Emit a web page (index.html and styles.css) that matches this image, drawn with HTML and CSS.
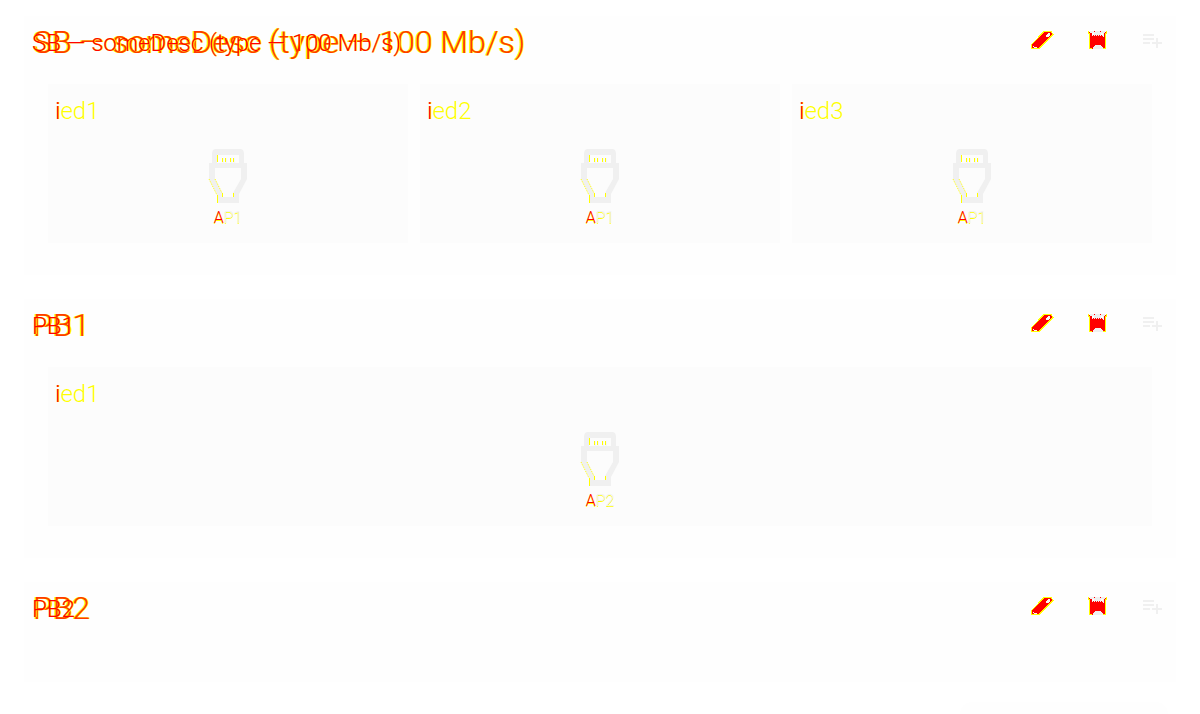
FILE: index.html
```html
<!DOCTYPE html>
<html lang="en">
<head>
<meta charset="utf-8">
<title>Subnetworks</title>
<link rel="stylesheet" href="styles.css">
</head>
<body>
<svg class="defs" width="0" height="0" aria-hidden="true">
  <symbol id="edit" viewBox="0 0 24 24">
    <path d="M1.5 14.5L14 1.5h7l2 3L9 18.5H1.5z" fill="#f00" stroke="#ff0" shape-rendering="crispEdges"/>
    <path d="M16 5l2-2h2v3l-2 1h-2zM3 16h1v1h3v1H4z" fill="#f8f8f8" shape-rendering="crispEdges"/>
  </symbol>
  <symbol id="delete" viewBox="0 0 24 24">
    <g shape-rendering="crispEdges">
      <path d="M4 2h17v17H4z" fill="#f00"/>
      <path d="M3 1v3h1v15h3v-1H5V3H4V1zM22 1v3h-1v15h-3v-1h2V3h1V1z" fill="#ff0"/>
      <path d="M5 1h15v2h-1v4h-1V6h-1V5h-1v1h-1V5h-1v1h-1V5h-1v1h-1V5h-1v1H9V5H8v1H7V3H5z" fill="#f0f0f0"/>
      <path d="M7 3h2v2H7zM16 3h2v2h-2z" fill="#fff"/>
      <path d="M8 19v-2h1v-1h1v-1h6v1h1v1h1v2z" fill="#f0f0f0"/>
      <path d="M9 1h1v1H9zM15 1h1v1h-1z" fill="#f00"/>
    </g>
  </symbol>
  <symbol id="add" viewBox="0 0 24 24">
    <path d="M3 4h11v2H3zM3 8h11v2H3zM3 12h7v2H3zM16 8h2v4h4v2h-4v4h-2v-4h-4v-2h4z" fill="#f0f0f0"/>
  </symbol>
  <symbol id="port" viewBox="0 0 40 56">
    <path fill="#f0f0f0" fill-rule="evenodd" d="M8 1h24q4 0 4 5v9h3v16l-8 15v9H9v-9L1 31V15h3V6q0-5 4-5zM9 7v8h22V7zM7 20v11l7 14v4h11v-4l8-14V20z"/>
    <path d="M15 10v5M18 10v5M23 10v5M26 10v5" stroke="#f0f0f0" fill="none"/>
    <path d="M9.500 7v7M14.500 10v4M17.500 10v4M22.500 10v4M25.500 10v4M9.500 47v8M14.500 45v4M25.500 45v4" stroke="#ff0" fill="none" shape-rendering="crispEdges"/>
    <path d="M1 31l8 16M7 31l7 14" stroke="#ff0" stroke-dasharray="1 1" fill="none"/>
  </symbol>
</svg>
<main class="page">
  <section class="subnet">
    <header class="bar">
      <h1 class="title">SB — someDesc (type — 100 Mb/s)<span class="ghost" aria-hidden="true">SB — someDesc (type — 100 Mb/s)</span></h1>
      <nav class="actions">
        <button aria-label="Edit"><svg><use href="#edit"/></svg></button>
        <button aria-label="Delete"><svg><use href="#delete"/></svg></button>
        <button aria-label="Add"><svg><use href="#add"/></svg></button>
      </nav>
    </header>
    <div class="devices">
      <article class="ied"><h2><b>i</b>ed1</h2><div class="port"><svg><use href="#port"/></svg><span><b>A</b>P1</span></div></article>
      <article class="ied"><h2><b>i</b>ed2</h2><div class="port"><svg><use href="#port"/></svg><span><b>A</b>P1</span></div></article>
      <article class="ied"><h2><b>i</b>ed3</h2><div class="port"><svg><use href="#port"/></svg><span><b>A</b>P1</span></div></article>
    </div>
  </section>
  <section class="subnet">
    <header class="bar">
      <h1 class="title">PB1<span class="ghost" aria-hidden="true">PB1</span></h1>
      <nav class="actions">
        <button aria-label="Edit"><svg><use href="#edit"/></svg></button>
        <button aria-label="Delete"><svg><use href="#delete"/></svg></button>
        <button aria-label="Add"><svg><use href="#add"/></svg></button>
      </nav>
    </header>
    <div class="devices">
      <article class="ied"><h2><b>i</b>ed1</h2><div class="port"><svg><use href="#port"/></svg><span><b>A</b>P2</span></div></article>
    </div>
  </section>
  <section class="subnet">
    <header class="bar">
      <h1 class="title">PB2<span class="ghost" aria-hidden="true">PB2</span></h1>
      <nav class="actions">
        <button aria-label="Edit"><svg><use href="#edit"/></svg></button>
        <button aria-label="Delete"><svg><use href="#delete"/></svg></button>
        <button aria-label="Add"><svg><use href="#add"/></svg></button>
      </nav>
    </header>
    <div class="devices"></div>
  </section>
</main>
<div class="fab-shadow"></div>
</body>
</html>
```
FILE: styles.css
```css
* { box-sizing: border-box; }
body { margin: 0; background: #fff; font-family: Roboto, sans-serif; font-weight: 300; }
.defs { position: absolute; }
.page { display: flex; flex-direction: column; gap: 24px; padding: 16px 24px 32px; }
.subnet { background: #fefefe; }
.bar { display: flex; justify-content: space-between; height: 52px; }
.title {
  position: relative; margin: 0; padding-left: 9px;
  font-size: 32px; line-height: 52px; font-weight: 300; white-space: nowrap;
  color: rgba(255, 0, 0, 0.8); text-shadow: 1px 0 #ff0, -1px 0 #ff0;
}
.ghost { position: absolute; left: 8px; top: 0; font-size: 24px; line-height: 54px; color: #f00; text-shadow: 1px 0 #ff0; }
.actions { display: flex; gap: 7px; }
.actions button { width: 48px; height: 52px; padding: 0; border: 0; background: none; display: grid; place-items: center; }
.actions svg { width: 24px; height: 24px; }
.devices { display: grid; grid-auto-flow: column; grid-auto-columns: 1fr; gap: 12px; padding: 16px 24px 32px; }
.ied { background: #fcfcfc; padding-bottom: 11px; }
.ied h2 { margin: 0; padding-left: 7px; font-size: 24px; line-height: 54px; height: 64px; font-weight: 300; color: #ff0; }
.ied h2 b { font-weight: 300; color: #f00; text-shadow: 1px 0 #ff0; }
.port { display: flex; flex-direction: column; align-items: center; font-size: 16px; line-height: 28px; color: #f0f0f0; text-shadow: 0 1px #ff0; }
.port svg { width: 40px; height: 56px; }
.port b { font-weight: 300; color: #f00; }
.fab-shadow { position: fixed; right: 32px; bottom: 0; width: 208px; height: 12px; border-radius: 24px 24px 0 0; background: #fefefe; }
```
